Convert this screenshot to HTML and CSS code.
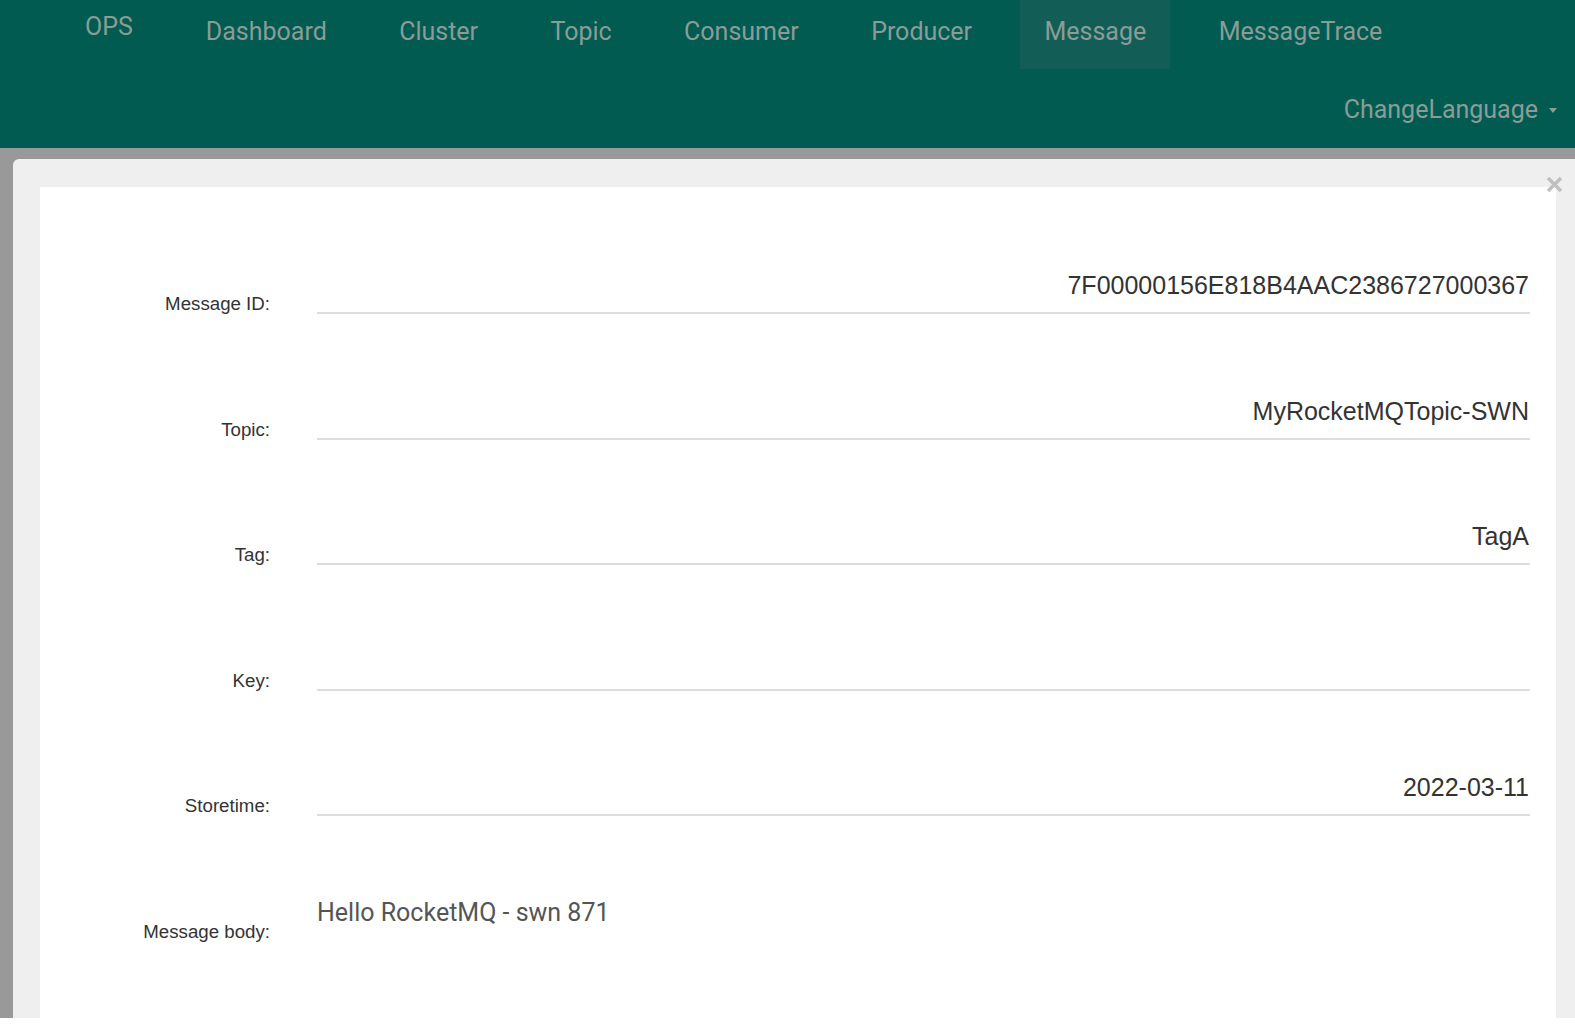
FILE: index.html
```html
<!DOCTYPE html>
<html lang="en">
<head>
<meta charset="utf-8">
<title>RocketMQ Console - Message</title>
<link rel="stylesheet" href="styles.css">
</head>
<body>
<header class="navbar">
  <div class="nav-top">
    <div class="brand">OPS</div>
    <ul class="nav-list">
      <li class="nav-item">Dashboard</li>
      <li class="nav-item">Cluster</li>
      <li class="nav-item">Topic</li>
      <li class="nav-item">Consumer</li>
      <li class="nav-item">Producer</li>
      <li class="nav-item active">Message</li>
      <li class="nav-item">MessageTrace</li>
    </ul>
  </div>
  <div class="nav-bottom">
    <div class="lang">ChangeLanguage <span class="caret"></span></div>
  </div>
</header>
<main class="backdrop">
  <div class="modal">
    <button class="close" aria-label="Close">
      <svg width="17" height="17" viewBox="0 0 17 17"><path d="M2 2 L15 15 M15 2 L2 15" stroke="#bfbfbf" stroke-width="3.4" fill="none"/></svg>
    </button>
    <div class="panel">
      <div class="row">
        <div class="label">Message ID:</div>
        <div class="field">7F00000156E818B4AAC2386727000367</div>
      </div>
      <div class="row">
        <div class="label">Topic:</div>
        <div class="field">MyRocketMQTopic-SWN</div>
      </div>
      <div class="row">
        <div class="label">Tag:</div>
        <div class="field">TagA</div>
      </div>
      <div class="row">
        <div class="label">Key:</div>
        <div class="field"></div>
      </div>
      <div class="row">
        <div class="label">Storetime:</div>
        <div class="field">2022-03-11</div>
      </div>
      <div class="row">
        <div class="label">Message body:</div>
        <div class="body-value">Hello RocketMQ - swn 871</div>
      </div>
    </div>
  </div>
</main>
</body>
</html>
```

FILE: styles.css
```css
* { box-sizing: border-box; }
html, body { margin: 0; padding: 0; background: #fff; }
body { font-family: "Liberation Sans", Arial, sans-serif; overflow: hidden; }

.navbar {
  background: #015b51;
  height: 148px;
  font-family: Roboto, "Noto Sans", sans-serif;
  font-size: 25px;
  color: #8b9c97;
}
.nav-top {
  display: flex;
  height: 69px;
}
.brand {
  padding-left: 85px;
  line-height: 53px;
}
.nav-list {
  display: flex;
  gap: 24.4px;
  list-style: none;
  margin: 0 0 0 49px;
  padding: 0;
}
.nav-item {
  padding: 0 24px;
  line-height: 64px;
  height: 69px;
}
.nav-item.active { background: #125e57; }
.nav-bottom {
  display: flex;
  justify-content: flex-end;
  height: 79px;
  padding-top: 2px;
  line-height: 79px;
  padding-right: 18px;
}
.lang { display: flex; align-items: center; height: 77px; }
.caret {
  display: inline-block;
  width: 0; height: 0;
  margin-left: 11px;
  margin-top: 2px;
  border-left: 4.5px solid transparent;
  border-right: 4.5px solid transparent;
  border-top: 5px solid #8b9c97;
}

.backdrop {
  background: #999;
  height: 870px;
  overflow: hidden;
  padding: 11px 0 0 13px;
}
.modal {
  position: relative;
  background: #efefef;
  border-radius: 6px 0 0 0;
  height: 900px;
  padding: 28px 19px 0 27px;
}
.close {
  position: absolute;
  top: 17px;
  right: 12px;
  border: 0;
  background: none;
  padding: 0;
  width: 17px;
  height: 17px;
  cursor: pointer;
}
.close svg { display: block; }
.panel {
  background: #fff;
  height: 900px;
  padding: 84px 26px 0 0;
  display: flex;
  flex-direction: column;
  gap: 82.5px;
}
.row {
  display: flex;
  align-items: flex-end;
}
.label {
  width: 230px;
  text-align: right;
  font-size: 18.7px;
  line-height: 20px;
  color: #333;
  flex-shrink: 0;
}
.field {
  flex: 1;
  margin-left: 47px;
  text-align: right;
  font-size: 25px;
  line-height: 28px;
  height: 43px;
  padding: 0 1px 13px 0;
  border-bottom: 2px solid #ddd;
  color: #333;
}
.body-value {
  flex: 1;
  margin-left: 47px;
  font-family: Roboto, "Noto Sans", sans-serif;
  font-size: 25px;
  line-height: 28px;
  padding-bottom: 15px;
  color: #555;
}
```
